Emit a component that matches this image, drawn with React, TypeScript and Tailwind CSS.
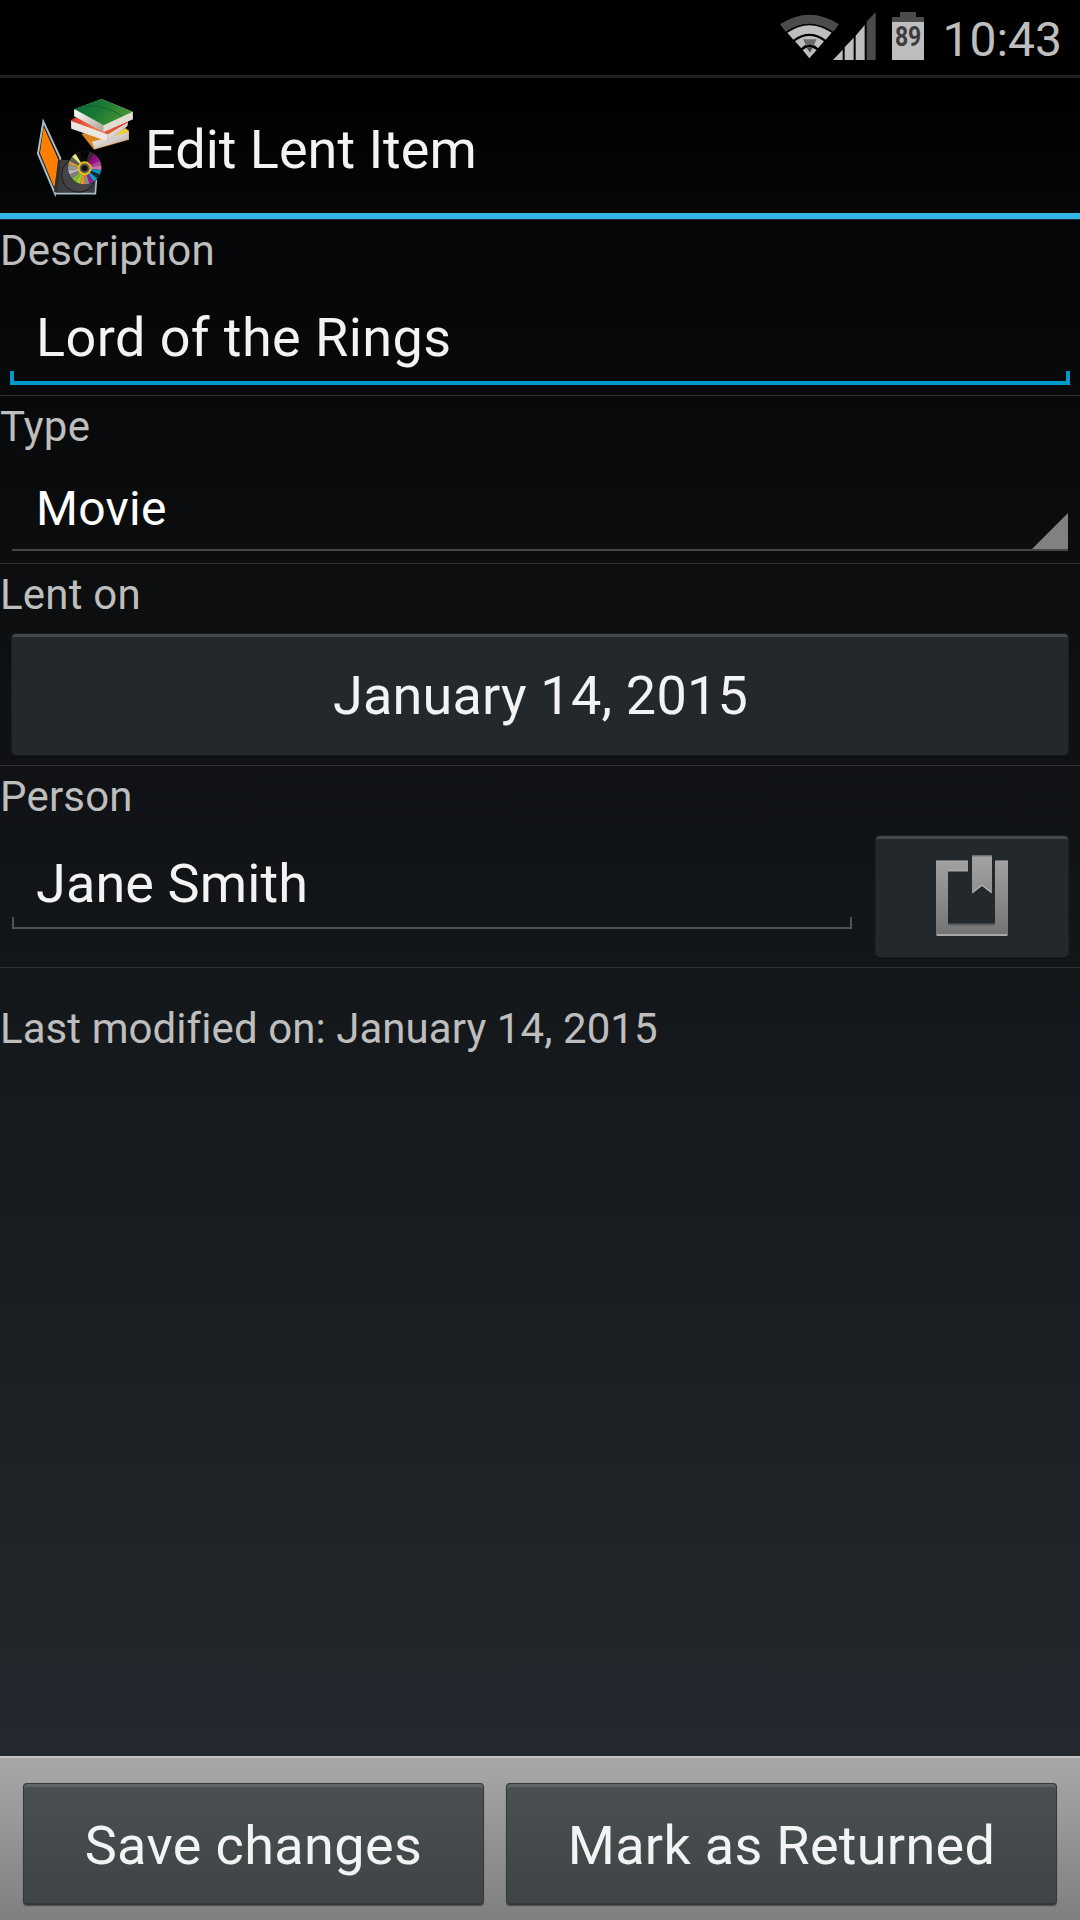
import type { ReactNode } from "react";

const discColors = [
  "#050505", "#2c2c2c", "#8a0a80", "#a0128c", "#a8489a", "#d070ac",
  "#1590bd", "#0c2a34", "#10a0c8", "#9c1a90", "#8c8c8c", "#e8962a",
  "#9ccc30", "#88b83a", "#808080", "#b5b5b5", "#9a9a9a", "#c89a40",
  "#5c5c5c", "#e8e880", "#101010", "#050505",
];

function Wedge({ index, color }: { index: number; color: string }) {
  const step = (Math.PI * 2) / discColors.length;
  const a = index * step - Math.PI / 2;
  const b = a + step;
  const x = (t: number) => 194 + 50 * Math.cos(t);
  const y = (t: number) => 248 + 50 * Math.sin(t);
  return (
    <path
      d={`M194 250 L${x(a)} ${y(a)} A50 50 0 0 1 ${x(b)} ${y(b)} Z`}
      fill={color}
    />
  );
}

function AppIcon() {
  return (
    <svg className="h-[100px] w-[98px] shrink-0" viewBox="48 36 294 300">
      <defs>
        <linearGradient id="cover" x1="0" y1="0" x2="1" y2="0.4">
          <stop offset="0" stopColor="#06683a" />
          <stop offset="0.55" stopColor="#1c7a34" />
          <stop offset="1" stopColor="#4a9532" />
        </linearGradient>
        <linearGradient id="red" x1="0" y1="0" x2="1" y2="0.3">
          <stop offset="0" stopColor="#d8302c" />
          <stop offset="0.5" stopColor="#ee7a50" />
          <stop offset="1" stopColor="#d8402c" />
        </linearGradient>
        <linearGradient id="pages" x1="0" y1="0" x2="1" y2="1">
          <stop offset="0" stopColor="#ffffff" />
          <stop offset="1" stopColor="#a9a196" />
        </linearGradient>
      </defs>

      {/* Stack of books */}
      <path d="M184 146 L222 194 L327 164 L327 136 L300 128 Z" fill="#d9861f" />
      <path d="M216 170 L326 140 L326 163 L223 192 Z" fill="url(#pages)" />
      <path d="M290 136 L318 130 L326 140 L290 152 Z" fill="#ecd02c" />
      <path d="M153 106 L164 98 L324 108 L322 122 L262 168 L153 128 Z" fill="url(#red)" />
      <path d="M153 108 L262 148 L262 169 L154 131 Z" fill="#ebe6df" />
      <path d="M262 149 L324 112 L322 124 L262 169 Z" fill="url(#pages)" />
      <path d="M163 73 L245 42 L338 80 L338 103 L251 140 L163 94 Z" fill="#e9e5dc" />
      <path d="M163 74 L251 119 L251 140 L163 94 Z" fill="url(#pages)" />
      <path d="M251 119 L338 81 L338 103 L251 140 Z" fill="#e2dcd2" />
      <path d="M163 72 L245 42 L338 80 L251 121 Z" fill="url(#cover)" />
      <path d="M192 62 Q262 60 306 94" fill="none" stroke="#0a5c2c" strokeWidth="2" />

      {/* Open disc case */}
      <path d="M121 224 L229 228 L226 326 L104 326 Z" fill="#3d3d3f" />
      <path d="M106 326 H226 L229 285" fill="none" stroke="#a6c0ca" strokeWidth="5" />
      <circle cx="176" cy="270" r="51" fill="#444446" stroke="#19191a" strokeWidth="3" />
      <path d="M70 110 L121 220 L105 326 L54 206 Z" fill="#171717" stroke="#a6bec8" strokeWidth="6" />
      <path d="M71 126 L117 228 L103 308 L60 204 Z" fill="#ff8000" />
      <path d="M119 224 L107 322" stroke="#303032" strokeWidth="10" />

      <circle cx="194" cy="248" r="51" fill="#222" />
      {discColors.map((color, i) => (
        <Wedge key={i} index={i} color={color} />
      ))}
      <circle cx="194" cy="250" r="18" fill="#595959" stroke="#f0bb18" strokeWidth="6" />
      <circle cx="194" cy="250" r="9" fill="#111" />
    </svg>
  );
}

function WifiIcon() {
  return (
    <svg className="h-12 w-[59px]" viewBox="0 0 177 144">
      <path d="M0 37 Q88 -20 177 37 L160 59 Q88 11 17 59 Z" fill="#4b4b4b" />
      <path d="M22 62 Q88 17 155 62 L137 83 Q88 48 40 83 Z" fill="#bebebe" />
      <path d="M45 88 Q88 56 132 88 L114 109 Q88 82 64 109 Z" fill="#bebebe" />
      <path d="M68 114 Q88 98 110 114 L88 139 Z" fill="#bebebe" />
      <path d="M69 82 H110 L100 102 Q88 94 79 102 Z" fill="#696969" />
      <path d="M80 107 Q88 104 98 107 L90 122 Z" fill="#4b4b4b" />
    </svg>
  );
}

function SignalIcon() {
  return (
    <svg className="-ml-1.5 h-12 w-[43px]" viewBox="0 0 129 144">
      <path d="M0 144 L29 113 V144 Z M35 106 L62 77 V144 H35 Z M68 71 L95 39 V144 H68 Z" fill="#bebebe" />
      <path d="M101 29 L128 0 V144 H101 Z" fill="#4b4b4b" />
    </svg>
  );
}

function BatteryIcon() {
  return (
    <div className="ml-4 flex h-12 w-8 flex-col items-center">
      <span className="h-[5px] w-4 bg-[#4b4b4b]" />
      <span className="h-[5px] w-8 bg-[#4b4b4b]" />
      <span className="flex h-[38px] w-8 justify-center bg-[#bebebe] text-[28px] leading-[30px] font-bold text-[#3c3c3c]">
        <span className="scale-x-[0.82]">89</span>
      </span>
    </div>
  );
}

function BookmarkIcon() {
  return (
    <svg className="-mt-[5px] h-[84px] w-[76px]" viewBox="0 0 76 84">
      <defs>
        <linearGradient id="metal" x1="0" y1="4" x2="0" y2="82" gradientUnits="userSpaceOnUse">
          <stop offset="0" stopColor="#a3a3a3" />
          <stop offset="1" stopColor="#737373" />
        </linearGradient>
      </defs>
      <path
        d="M3 6 H34 V17 H14 V70 H61 V6 H73 Q74 6 74 7 V81 Q74 82 73 82 H3 Q2 82 2 81 V7 Q2 6 3 6 Z"
        fill="url(#metal)"
      />
      <path d="M14 70.500 H61" stroke="#5d5d5d" strokeWidth="2" />
      <path d="M3 81 H73 M14 16.500 H34" stroke="#a8a8a8" strokeWidth="2" />
      <path d="M3 6.500 H34 M61 6.500 H73" stroke="#727272" strokeWidth="1" />
      <path d="M38 1.500 H58 V39.500 L48 32 L38 39.500 Z" fill="url(#metal)" />
      <path d="M38.500 38.500 L48 31 L57.500 38.500" fill="none" stroke="#adadad" strokeWidth="1.500" />
      <path d="M38 2 H58" stroke="#727272" strokeWidth="1" />
    </svg>
  );
}

function Row({ label, children }: { label: string; children: ReactNode }) {
  return (
    <section className="border-b border-[#303336]">
      <div className="pt-1.5 text-[42px] leading-[49px] tracking-[0.2px] text-[#bebebe]">{label}</div>
      {children}
    </section>
  );
}

const darkButton =
  "flex h-[121px] items-center justify-center rounded-[4px] border-t-[3px] border-[#42474b] bg-[#23282c] shadow-[0_0_0_1px_rgba(40,44,47,0.5),0_2px_1px_rgba(0,0,0,0.35)]";

const footerButton =
  "flex h-[122px] items-center justify-center rounded-[4px] border border-b-2 border-[#35393b] bg-linear-to-b/srgb from-[#4a4f52] to-[#3f4447] pt-1 text-[54px] text-[#f3f3f3] shadow-[inset_0_3px_0_#5f6466,0_1px_1px_#4a4a4a]";

export default function App() {
  return (
    <div className="flex h-[1920px] w-[1080px] flex-col overflow-hidden bg-linear-to-b/srgb from-black to-[#272d33] font-[Roboto,sans-serif] text-[#f3f3f3]">
      {/* Status bar */}
      <div className="flex h-[78px] shrink-0 items-start justify-end border-b-[3px] border-[#202020] bg-black pt-3 pr-[18px]">
        <WifiIcon />
        <SignalIcon />
        <BatteryIcon />
        <span className="ml-[18px] text-[48px] leading-[55px] text-[#bebebe]">10:43</span>
      </div>

      <header className="flex h-[141px] shrink-0 border-b-[6px] border-[#33b5e5] bg-linear-to-b/srgb from-black to-[#050606] pt-[19px] pl-9">
        <AppIcon />
        <h1 className="ml-[11px] pt-[21px] text-[54px] leading-[63px]">Edit Lent Item</h1>
      </header>

      <main className="flex-1 border-t border-[#22262a]">
        <Row label="Description">
          <div className="mx-2.5 mb-2.5">
            <div className="h-24 pt-[31px] pl-[26px] text-[54px] leading-[63px] tracking-[0.42px]">
              Lord of the Rings
            </div>
            <div className="h-3.5 border-x-4 border-b-4 border-[#0099cc]" />
          </div>
        </Row>

        <Row label="Type">
          <div className="mx-3 mb-3 flex h-[100px] items-end justify-between border-b-2 border-[#454648]">
            <div className="h-[68px] pl-6 text-[48px] leading-[56px] tracking-[0.3px] text-white">Movie</div>
            <svg className="size-9" viewBox="0 0 36 36">
              <path d="M0 36 L36 0 V36 Z" fill="#808182" />
            </svg>
          </div>
        </Row>

        <Row label="Lent on">
          <div className="mx-3 mt-[15px] mb-2.5">
            <div className={`${darkButton} pb-0.5 pl-px text-[54px] tracking-[0.2px]`}>January 14, 2015</div>
          </div>
        </Row>

        <Row label="Person">
          <div className="mx-3 mb-2.5 flex h-[136px] justify-between">
            <div className="w-[840px]">
              <div className="h-24 pt-[31px] pl-6 text-[54px] leading-[63px] tracking-[0.12px]">Jane Smith</div>
              <div className="h-3 border-x-2 border-b-2 border-[#515456]" />
            </div>
            <div className={`${darkButton} mt-[15px] w-48`}>
              <BookmarkIcon />
            </div>
          </div>
        </Row>

        <p className="mt-9 text-[42px] leading-[49px] tracking-[0.07px] text-[#bebebe]">
          Last modified on: January 14, 2015
        </p>
      </main>

      <footer className="flex h-[164px] shrink-0 gap-[22px] border-t-2 border-[#c3c3c3] bg-linear-to-b/srgb from-[#a8a8a8] to-[#7f7f7f] px-[23px] pt-[25px]">
        <div className={`${footerButton} w-[461px] tracking-[0.4px]`}>Save changes</div>
        <div className={`${footerButton} w-[551px] tracking-[0.3px]`}>Mark as Returned</div>
      </footer>
    </div>
  );
}
